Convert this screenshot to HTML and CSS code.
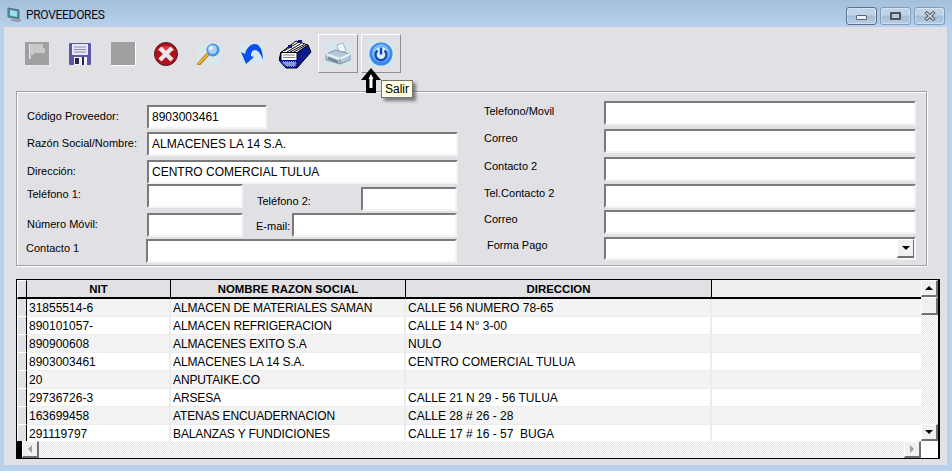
FILE: index.html
```html
<!DOCTYPE html>
<html lang="es">
<head>
<meta charset="UTF-8">
<meta name="viewport" content="width=device-width, initial-scale=1.0">
<title>PROVEEDORES</title>
<link rel="stylesheet" href="styles.css">
</head>
<body>
<header class="titlebar">
  <svg class="app-icon" width="15" height="16" viewBox="0 0 15 16">
    <path d="M1 1l11 2v9L1 10z" fill="#4a8fa8" stroke="#5b6d78"/>
    <path d="M3 3l7 1.4v5.4L3 8.500z" fill="#9fe0e8"/>
    <path d="M4 12l8 1 2-1v2l-3 1-7-1z" fill="#8d9aa6"/>
  </svg>
  <span class="app-title">PROVEEDORES</span>
  <div class="win-buttons">
    <div class="win-btn win-active"><span class="win-min"></span></div>
    <div class="win-btn"><span class="win-max"></span></div>
    <div class="win-btn win-close">
      <svg width="12" height="10" viewBox="0 0 12 10"><path d="M1.500 1l9 8M10.500 1l-9 8" stroke="#50565e" stroke-width="3.400"/><path d="M2 1.500l8 7M10 1.500l-8 7" stroke="#e4e8ee" stroke-width="1.200"/></svg>
    </div>
  </div>
</header>

<main class="client">
  <div class="toolbar">
    <div class="tool tool-new">
      <svg width="25" height="24" viewBox="0 0 25 24">
        <rect width="25" height="24" fill="#a0a0a0"/>
        <path d="M0 24H25V0" fill="none" stroke="#fff" stroke-width="1.500"/>
        <path d="M4 2h14v4h1l1 0v5H9v2H6v4H4z" fill="#c9c9c9"/>
        <path d="M4 2h1v15H4z" fill="#e4e4e4"/>
      </svg>
    </div>
    <div class="tool tool-save">
      <svg width="22" height="22" viewBox="0 0 22 22">
        <rect width="22" height="22" rx="1" fill="#5a58a8"/>
        <rect x="3" y="1" width="16" height="11" fill="#e6e6f4"/>
        <path d="M5 4h12M5 6.500h12M5 9h12" stroke="#8888b8"/>
        <rect x="5" y="14" width="13" height="8" fill="#f2f2f8"/>
        <rect x="6" y="15" width="4" height="6" fill="#26264c"/>
        <rect x="13" y="14" width="2" height="8" fill="#26264c"/>
      </svg>
    </div>
    <div class="tool tool-blank"></div>
    <div class="tool tool-cancel">
      <svg width="24" height="24" viewBox="0 0 24 24">
        <circle cx="12" cy="12" r="11.500" fill="#b0121c"/>
        <circle cx="12" cy="12" r="11.500" fill="none" stroke="#4a1a20"/>
        <path d="M3 9a10 9 0 0 1 18 0z" fill="#d83a44"/>
        <path d="M7.500 7.500l9 9M16.500 7.500l-9 9" stroke="#e8e8e8" stroke-width="4.400" stroke-linecap="square"/>
      </svg>
    </div>
    <div class="tool tool-search">
      <svg width="24" height="22" viewBox="0 0 24 22">
        <rect width="24" height="22" fill="#d8e7ea"/>
        <path d="M2 21L11 11" stroke="#c07a10" stroke-width="3.600" stroke-linecap="round"/>
        <path d="M2 20.500L11 11" stroke="#f5c040" stroke-width="1.600" stroke-linecap="round"/>
        <circle cx="16" cy="7" r="6.500" fill="#4d8fe8"/>
        <circle cx="15.500" cy="6.500" r="4.500" fill="#a8d0f8"/>
        <circle cx="14" cy="5" r="2" fill="#e4f2ff"/>
      </svg>
    </div>
    <div class="tool tool-undo">
      <svg width="24" height="22" viewBox="0 0 24 22">
        <rect width="24" height="22" fill="#d8e7ea"/>
        <path d="M1 9L5 11C6 6 10 1 15 1C20 1 23 8 23 17C21 11 18 7 15 7C12 7 11 10 11 13L14 14L6 21Z" fill="#0a50f0"/>
      </svg>
    </div>
    <div class="tool tool-cards">
      <svg width="34" height="30" viewBox="0 0 34 30">
        <path d="M0 21L7 29H18L32 13L29 6L18 13H2z" fill="#0a1a8c" stroke="#000"/>
        <path d="M2 13.500L17 2L29 6L18 13.500z" fill="#fff" stroke="#000"/>
        <path d="M5 12L19 3.500M8 13L22 4.500M11 13L25 5.500M14 13.500L27 6" stroke="#000"/>
        <rect x="2" y="13.500" width="16" height="8" fill="#fff" stroke="#000"/>
        <path d="M4 16h12M4 18.500h12" stroke="#808080" stroke-width="1.200"/>
        <path d="M1 22h17l-1 6H7z" fill="#8a9ae0"/>
        <path d="M1 22h17l-1 6H7z" fill="none" stroke="#0a1a8c" stroke-dasharray="1 1" stroke-width="2"/>
        <rect x="19" y="1" width="4" height="3" fill="#0a1a8c"/>
        <rect x="9" y="6" width="4" height="3" fill="#0a1a8c"/>
      </svg>
    </div>
    <div class="tool-btn">
      <svg width="26" height="24" viewBox="0 0 26 24">
        <rect width="26" height="24" fill="#d6e6ea"/>
        <path d="M12 3l6-2 3 8-7 2z" fill="#f4f8fc" stroke="#a8b8c8"/>
        <path d="M1 12l10-4 14 4v6l-10 4L1 18z" fill="#b4c8dc" stroke="#8498ac"/>
        <path d="M1 12l14 5 10-5" fill="none" stroke="#e8f0f8" stroke-width="2"/>
        <path d="M15 17v5" stroke="#708498"/>
        <path d="M3 16l10 4" stroke="#687c90" stroke-width="2"/>
      </svg>
    </div>
    <div class="tool-btn">
      <svg width="26" height="26" viewBox="0 0 26 26">
        <rect width="26" height="26" fill="#d6e6ea"/>
        <circle cx="13" cy="13" r="11.500" fill="#3a88ec"/>
        <circle cx="13" cy="12" r="9" fill="#7ab8f6"/>
        <circle cx="13" cy="13" r="7" fill="#d8ecfc"/>
        <path d="M9.500 9.500a5.500 5.500 0 1 0 7 0" fill="none" stroke="#1048b0" stroke-width="2.400"/>
        <path d="M13 6.500v7" stroke="#1048b0" stroke-width="2.400"/>
      </svg>
    </div>
  </div>

  <section class="panel">
    <div class="form-left">
      <label class="lbl">Código Proveedor:</label>
      <input class="field field-code" type="text" value="8903003461">

      <label class="lbl">Razón Social/Nombre:</label>
      <input class="field" type="text" value="ALMACENES LA 14 S.A.">

      <label class="lbl">Dirección:</label>
      <input class="field" type="text" value="CENTRO COMERCIAL TULUA">

      <label class="lbl lbl-up">Teléfono 1:</label>
      <div class="pair">
        <input class="field field-short" type="text">
        <label class="lbl lbl-tel2">Teléfono 2:</label>
        <input class="field field-tel2" type="text">
      </div>

      <label class="lbl">Número Móvil:</label>
      <div class="pair">
        <input class="field field-short" type="text">
        <label class="lbl lbl-mail">E-mail:</label>
        <input class="field field-mail" type="text">
      </div>

      <label class="lbl lbl-contact">Contacto 1</label>
      <input class="field field-contact" type="text">
    </div>

    <div class="form-right">
      <label class="lbl lbl-first">Telefono/Movil</label>
      <input class="field" type="text">
      <label class="lbl">Correo</label>
      <input class="field" type="text">
      <label class="lbl">Contacto 2</label>
      <input class="field" type="text">
      <label class="lbl">Tel.Contacto 2</label>
      <input class="field" type="text">
      <label class="lbl">Correo</label>
      <input class="field" type="text">
      <label class="lbl lbl-pay">Forma Pago</label>
      <div class="combo">
        <div class="combo-btn"><span class="arrow-down"></span></div>
      </div>
    </div>
  </section>

  <section class="grid">
    <div class="grid-top">
      <div class="grid-rows">
        <table class="data">
          <colgroup>
            <col class="col-ind"><col class="col-nit"><col class="col-name"><col class="col-addr"><col>
          </colgroup>
          <thead>
            <tr><th class="ind"></th><th>NIT</th><th>NOMBRE RAZON SOCIAL</th><th>DIRECCION</th><th class="th-rest"></th></tr>
          </thead>
          <tbody>
            <tr><td class="ind"></td><td>31855514-6</td><td class="name">ALMACEN DE MATERIALES SAMAN</td><td>CALLE 56 NUMERO 78-65</td><td></td></tr>
            <tr><td class="ind"></td><td>890101057-</td><td class="name">ALMACEN REFRIGERACION</td><td>CALLE 14 N° 3-00</td><td></td></tr>
            <tr><td class="ind"></td><td>890900608</td><td class="name">ALMACENES EXITO S.A</td><td>NULO</td><td></td></tr>
            <tr><td class="ind"></td><td>8903003461</td><td class="name">ALMACENES LA 14 S.A.</td><td>CENTRO COMERCIAL TULUA</td><td></td></tr>
            <tr><td class="ind"></td><td>20</td><td class="name">ANPUTAIKE.CO</td><td></td><td></td></tr>
            <tr><td class="ind"></td><td>29736726-3</td><td class="name">ARSESA</td><td>CALLE 21 N 29 - 56 TULUA</td><td></td></tr>
            <tr><td class="ind"></td><td>163699458</td><td class="name">ATENAS ENCUADERNACION</td><td>CALLE 28 # 26 - 28</td><td></td></tr>
            <tr><td class="ind"></td><td>291119797</td><td class="name">BALANZAS Y FUNDICIONES</td><td>CALLE 17 # 16 - 57&nbsp; BUGA</td><td></td></tr>
          </tbody>
        </table>
      </div>
      <div class="vscroll">
        <div class="sb-btn sb-v"><span class="arrow-up"></span></div>
        <div class="sb-btn sb-thumb"></div>
        <div class="sb-track"></div>
        <div class="sb-btn sb-v"><span class="arrow-down"></span></div>
      </div>
    </div>
    <div class="hscroll">
      <div class="hs-block"></div>
      <div class="sb-btn sb-h"><span class="arrow-left"></span></div>
      <div class="sb-track"></div>
      <div class="sb-btn sb-h"><span class="arrow-right"></span></div>
      <div class="hs-corner"></div>
    </div>
  </section>
</main>

<svg class="cursor" width="20" height="26" viewBox="0 0 20 26">
  <path d="M10 0L20 12H15V25H5V12H0z" fill="#000"/>
  <path d="M10 6L12.500 11H11.500V20H8.500V11H7.500z" fill="#fff"/>
</svg>
<div class="tooltip">Salir</div>
</body>
</html>
```

FILE: styles.css
```css
* {
  box-sizing: border-box;
}

html, body {
  margin: 0;
  height: 100%;
  overflow: hidden;
}

body {
  position: relative;
  background: #b9d1ea;
  font-family: "Liberation Sans", Arial, sans-serif;
  font-size: 11px;
  color: #000;
}

/* title bar */
.titlebar {
  height: 27px;
  display: flex;
  align-items: center;
  padding: 0 8px 0 7px;
  background: linear-gradient(#a4bfdc, #b9d1ea);
}

.app-icon {
  margin-top: 2px;
}

.app-title {
  margin-left: 4px;
  margin-top: 3px;
  font-family: Roboto, sans-serif;
  font-size: 12px;
  letter-spacing: -0.3px;
  color: #0a0a14;
}

.win-buttons {
  margin-left: auto;
  display: flex;
  gap: 3px;
  margin-top: 4px;
  margin-right: -1px;
}

.win-btn {
  width: 31px;
  height: 18px;
  display: flex;
  align-items: center;
  justify-content: center;
  border: 1px solid #7f9cbc;
  border-radius: 3px;
  background: linear-gradient(#c0d4e8 45%, #a4bcd6 50%, #b8cee4);
  box-shadow: inset 0 0 0 1px rgba(255, 255, 255, 0.35);
}

.win-active {
  border-color: #5a7088;
}

.win-min {
  width: 11px;
  height: 5px;
  margin-top: 3px;
  background: #eef2f6;
  border: 1px solid #5a6470;
  border-radius: 1px;
}

.win-max {
  width: 11px;
  height: 8px;
  background: #b4c8de;
  border: 2px solid #50565e;
}

/* main window area */
.client {
  height: 438px;
  margin: 0 5px 0 4px;
  padding-top: 7px;
  background: #e0e0e5;
}

.toolbar {
  height: 39px;
  display: flex;
  align-items: center;
  padding-left: 21px;
}

.tool {
  display: flex;
  margin-top: 1px;
}

.tool-save {
  margin-left: 19px;
}

.tool-blank {
  width: 25px;
  height: 24px;
  margin-left: 20px;
  background: #a0a0a0;
  border-right: 1px solid #fff;
  border-bottom: 1px solid #fff;
}

.tool-cancel {
  margin-left: 18px;
}

.tool-search {
  margin-left: 19px;
}

.tool-undo {
  margin-left: 19px;
}

.tool-cards {
  margin-left: 15px;
}

.tool-btn {
  width: 40px;
  height: 39px;
  margin-left: 3px;
  display: flex;
  align-items: center;
  justify-content: center;
  border: 1px solid;
  border-color: #fff #909090 #909090 #fff;
}

.tool-cards + .tool-btn {
  margin-left: 5px;
}

/* supplier form */
.panel {
  position: relative;
  width: 911px;
  height: 175px;
  margin: 18px 0 0 12px;
  display: flex;
  border: 1px solid #a0a0a0;
  box-shadow: 1px 1px 0 #fff, inset 1px 1px 0 #fff;
}

.form-left {
  width: 441px;
  margin-left: 10px;
  padding-top: 13px;
  display: grid;
  grid-template-columns: 120px 311px;
  grid-template-rows: 27px 28px 24px 29px 26px 23px;
  align-content: start;
}

.form-right {
  margin-left: 16px;
  padding-top: 9px;
  display: grid;
  grid-template-columns: 120px 312px;
  grid-template-rows: 28px 28px 27px 26px 27px 23px;
  align-content: start;
}

.lbl {
  display: block;
  line-height: 22px;
}

.lbl-up {
  line-height: 20px;
}

.lbl-contact {
  margin-left: -1px;
  line-height: 19px;
}

.form-right .lbl {
  line-height: 19px;
}

.form-right .lbl-first {
  margin-top: 1px;
}

.form-right .lbl-pay {
  margin: -1px 0 0 3px;
}

.field {
  width: 100%;
  height: 24px;
  padding: 0 0 0 3px;
  font-family: "Liberation Sans", Arial, sans-serif;
  font-size: 12px;
  color: #000;
  background: #fff;
  border: 2px solid;
  border-color: #7a7a7a #f4f4f4 #f4f4f4 #7a7a7a;
  border-radius: 0;
  outline: none;
}

.field-code {
  width: 120px;
}

.field-contact {
  margin-left: -1px;
}

.pair {
  display: flex;
  align-items: flex-start;
}

.field-short {
  width: 96px;
}

.lbl-tel2 {
  width: 104px;
  margin: 6px 0 0 14px;
}

.field-tel2 {
  width: 96px;
  margin-top: 3px;
}

.lbl-mail {
  width: 36px;
  margin: 2px 0 0 13px;
}

.field-mail {
  width: 165px;
}

.combo {
  position: relative;
  height: 23px;
  background: #fff;
  border: 2px solid;
  border-color: #7a7a7a #f4f4f4 #f4f4f4 #7a7a7a;
}

.combo-btn {
  position: absolute;
  top: 0;
  right: 0;
  width: 17px;
  height: 19px;
  display: flex;
  align-items: center;
  justify-content: center;
  background: #f0f0f0;
  border-right: 1px solid #707070;
  border-bottom: 2px solid #707070;
  border-left: 1px solid #fff;
  border-top: 1px solid #fff;
}

.arrow-down, .arrow-up, .arrow-left, .arrow-right {
  width: 0;
  height: 0;
  display: block;
  border-style: solid;
  border-color: transparent;
}

.arrow-down {
  border-width: 4px 4px 0;
  border-top-color: #000;
}

.arrow-up {
  border-width: 0 4px 4px;
  border-bottom-color: #000;
}

.arrow-left {
  border-width: 4px 4px 4px 0;
  border-right-color: #a0a0a0;
}

.arrow-right {
  border-width: 4px 0 4px 4px;
  border-left-color: #a0a0a0;
}

/* results grid */
.grid {
  width: 924px;
  height: 180px;
  margin: 13px 0 0 12px;
  background: #fff;
  border: 1px solid #000;
  border-right-width: 2px;
}

.grid-top {
  height: 161px;
  display: flex;
}

.grid-rows {
  width: 904px;
  overflow: hidden;
}

.data {
  width: 904px;
  table-layout: fixed;
  border-collapse: separate;
  border-spacing: 0;
  font-size: 12px;
}

.col-ind {
  width: 10px;
}

.col-nit {
  width: 144px;
}

.col-name {
  width: 235px;
}

.col-addr {
  width: 306px;
}

.data th {
  height: 19px;
  padding: 1px 0 0;
  background: #e0e0e5;
  border-right: 1px solid #000;
  border-bottom: 2px solid #000;
  font-size: 11.4px;
  font-weight: bold;
  text-align: center;
}

.data th.th-rest {
  background: #efefef;
  border-right: 0;
}

.data td {
  height: 18px;
  padding: 1px 0 0 2px;
  border-right: 2px solid #ececec;
  border-bottom: 1px solid #ececec;
  white-space: nowrap;
  overflow: hidden;
}

.data td.name {
  letter-spacing: -0.12px;
}

.data tbody tr:nth-child(odd) td {
  background: #f3f3f3;
}

.data .ind,
.data tbody tr:nth-child(odd) td.ind {
  padding: 0;
  background: #e0e0e5;
  border-right: 1px solid #000;
  border-bottom: 1px solid #fff;
  border-left: 1px solid #fff;
}

.data th.ind {
  border-bottom: 2px solid #000;
  border-top: 1px solid #fff;
}

.data td:last-child {
  border-right: 0;
}

.vscroll {
  width: 17px;
  display: flex;
  flex-direction: column;
}

.sb-btn {
  display: flex;
  align-items: center;
  justify-content: center;
  background: #f0f0f0;
  border: 1px solid;
  border-color: #fff #707070 #707070 #fff;
  border-width: 1px 2px 2px 1px;
}

.sb-v {
  height: 17px;
}

.sb-thumb {
  height: 18px;
}

.sb-track {
  flex: 1;
  background: repeating-conic-gradient(#e4e4e4 0 25%, #fff 0 50%) 0 0 / 2px 2px;
}

.hscroll {
  height: 17px;
  display: flex;
}

.hs-block {
  width: 5px;
  background: #000;
}

.sb-h {
  width: 17px;
}

.hs-corner {
  width: 17px;
  background: #fff;
}

/* things floating over the window */
.cursor {
  position: absolute;
  left: 361px;
  top: 68px;
}

.tooltip {
  position: absolute;
  left: 381px;
  top: 80px;
  height: 18px;
  padding: 0 3px;
  font-size: 12px;
  line-height: 17px;
  background: #ffffe1;
  border: 1px solid #767676;
  box-shadow: 3px 3px 3px rgba(0, 0, 0, 0.45);
}
```
